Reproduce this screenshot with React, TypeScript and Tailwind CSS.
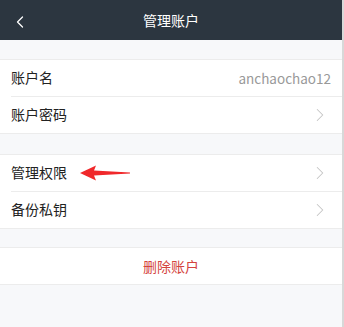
import { ChevronLeft, ChevronRight } from "lucide-react";

const font = { fontFamily: '"Noto Sans CJK SC", "Liberation Sans", sans-serif' };

function Row({ label, value, arrow, last, pointer }: { label: string; value?: string; arrow?: boolean; last?: boolean; pointer?: boolean }) {
  return (
    <div className="relative flex h-[36.5px] items-center pl-[11px]">
      <div className={`flex h-full flex-1 items-center pr-[11px] ${last ? "" : "border-b border-[#ececec]"}`}>
        <span className="text-[14px] text-[#222]">{label}</span>
        {pointer && (
          <svg width="52" height="16" viewBox="0 0 52 16" className="ml-[13px]">
            <path d="M0 8 L16 0.5 L14 5.5 L50 7.6 L50 8.4 L14 10.5 L16 15.5 Z" fill="#f0282b" />
          </svg>
        )}
        <span className="flex-1" />
        {value && <span className="text-[13.5px] text-[#999]">{value}</span>}
        {arrow && <ChevronRight className="h-[22px] w-[22px] text-[#c4c4c4]" strokeWidth={1.1} />}
      </div>
    </div>
  );
}

export default function App() {
  return (
    <div className="flex h-[327px] w-[344px] flex-col border-r-2 border-[#d8d8d8] bg-[#f7f8fa]" style={font}>
      <div className="relative flex h-[40px] items-center justify-center bg-[#2c3640]">
        <ChevronLeft className="absolute left-[10px] top-[12px] h-[20px] w-[20px] text-white" strokeWidth={1.5} />
        <span className="text-[14px] text-white">管理账户</span>
      </div>
      <div className="h-[20px] border-b border-[#ececec]" />
      <div className="bg-white">
        <Row label="账户名" value="anchaochao12" />
        <Row label="账户密码" arrow last />
      </div>
      <div className="h-[22px] border-y border-[#ececec]" />
      <div className="bg-white">
        <Row label="管理权限" arrow pointer />
        <Row label="备份私钥" arrow last />
      </div>
      <div className="h-[20px] border-y border-[#ececec]" />
      <div className="flex h-[37px] items-center justify-center border-b border-[#ececec] bg-white">
        <span className="text-[14px] text-[#d4433e]">删除账户</span>
      </div>
    </div>
  );
}
